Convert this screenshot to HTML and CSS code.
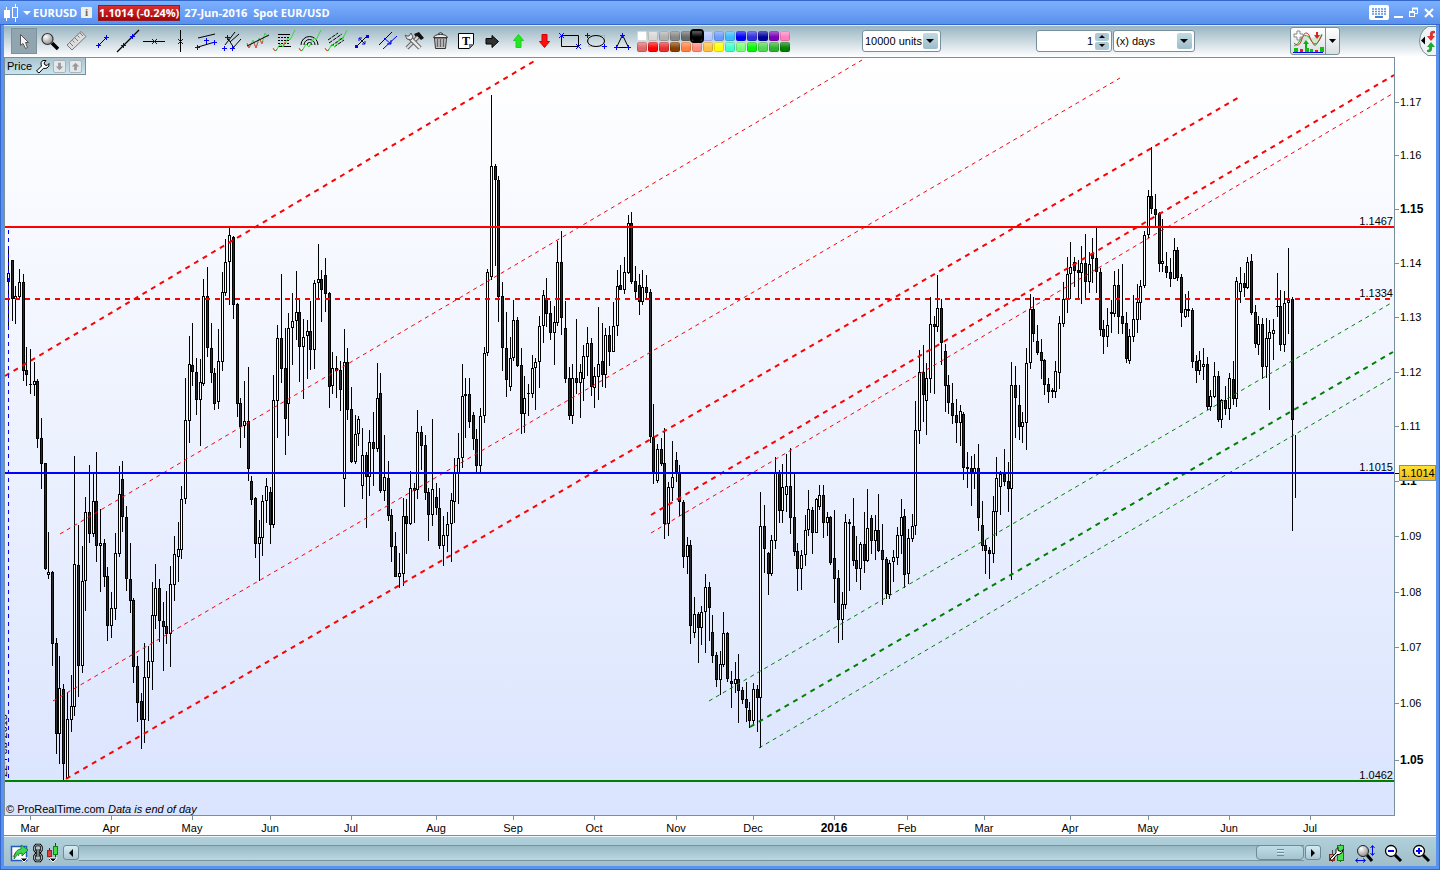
FILE: index.html
```html
<!DOCTYPE html>
<html lang="en">

<head>
    <meta charset="UTF-8">
    <meta name="viewport" content="width=device-width, initial-scale=1.0">
    <title>EURUSD</title>
    <link rel="stylesheet" href="styles.css">
</head>

<body>
    <svg class="defs" aria-hidden="true">
        <linearGradient id="plotFill" x1="0" y1="0" x2="0" y2="1">
            <stop offset="0" stop-color="#ffffff" />
            <stop offset="1" stop-color="#dae4fe" />
        </linearGradient>
        <linearGradient id="tagFill" x1="0" y1="0" x2="0" y2="1">
            <stop offset="0" stop-color="#ffe23a" />
            <stop offset="1" stop-color="#f2b808" />
        </linearGradient>
        <radialGradient id="lens" cx="35%" cy="30%" r="75%">
            <stop offset="0" stop-color="#ffffff" />
            <stop offset="1" stop-color="#8c8c8c" />
        </radialGradient>
        <symbol id="plus" viewBox="0 0 5 5" overflow="visible">
            <path d="M0 2.500h5M2.500 0v5" stroke="#0000ff" fill="none" />
        </symbol>
        <symbol id="cross" viewBox="0 0 5 5" overflow="visible">
            <path d="M0 0l5 5M5 0l-5 5" stroke="#0000ff" fill="none" />
        </symbol>
    </svg>

    <div class="window">
        <header class="titlebar">
            <svg class="app-icon" width="18" height="18" viewBox="0 0 18 18">
                <path d="M3.500 3v14M12.500 0v18" stroke="#fff" fill="none" />
                <rect x="1" y="6" width="6" height="8" fill="#fff" />
                <rect x="9.500" y="3.500" width="5" height="10" fill="#6ea0f8" stroke="#fff" />
            </svg>
            <svg class="caret" width="8" height="4" viewBox="0 0 8 4"><path d="M0 0h8l-4 4z" fill="#fff" /></svg>
            <span class="symbol">EURUSD</span>
            <button class="info" aria-label="Information">i</button>
            <span class="quote">1.1014 (-0.24%)</span>
            <span class="date">27-Jun-2016</span>
            <span class="market">Spot EUR/USD</span>
            <div class="window-buttons">
                <button aria-label="Keyboard">
                    <svg width="20" height="15" viewBox="0 0 20 15">
                        <rect width="20" height="15" rx="2" fill="#fff" />
                        <path d="M3 4h14M3 6.500h14M3 9h14" stroke="#5a8fe8" stroke-width="1.500" stroke-dasharray="2 1" />
                        <path d="M6 12h8" stroke="#4a7fd8" stroke-width="2" />
                    </svg>
                </button>
                <button aria-label="Minimize">
                    <svg width="10" height="12" viewBox="0 0 10 12"><path d="M0 10h9" stroke="#fff" stroke-width="2" /></svg>
                </button>
                <button aria-label="Restore">
                    <svg width="10" height="12" viewBox="0 0 10 12">
                        <path d="M3.500 4V1.500h5v5H6" fill="none" stroke="#fff" />
                        <path d="M3 1.500h6" stroke="#fff" stroke-width="2" />
                        <rect x="0.500" y="4.500" width="5" height="5" fill="none" stroke="#fff" />
                        <path d="M0 5h6" stroke="#fff" stroke-width="2" />
                    </svg>
                </button>
                <button aria-label="Close">
                    <svg width="10" height="12" viewBox="0 0 10 12"><path d="M1 2l8 8M9 2l-8 8" stroke="#fff" stroke-width="2" /></svg>
                </button>
            </div>
        </header>

        <main class="frame">
            <div class="toolbar">
                <div class="tools">
                    <button class="tool active" aria-label="Pointer">
                        <svg viewBox="0 0 24 24"><path d="M8.500 5.500v11l2.500-2 2.500 5 2-1-2-5h3z" fill="#f4f4f4" stroke="#555" /></svg>
                    </button>
                    <button class="tool" aria-label="Zoom">
                        <svg viewBox="0 0 24 24"><path d="M14 14l6 6" stroke="#000" stroke-width="3.500" /><circle cx="9.500" cy="10" r="5.500" fill="url(#lens)" stroke="#333" stroke-width="1.200" /></svg>
                    </button>
                    <button class="tool" aria-label="Ruler">
                        <svg viewBox="0 0 24 24"><path d="M3 16L17 2.500l5 5L8 21z" fill="#ddd" stroke="#777" /><path d="M6 14l3 3M8.500 11.500l2 2M11 9l3 3M13.500 6.500l2 2M16 4l3 3" stroke="#777" /></svg>
                    </button>
                    <button class="tool" aria-label="Segment">
                        <svg viewBox="0 0 24 24"><path d="M8 17l9-9" stroke="#000" /><use href="#plus" x="6" y="14" width="5" height="5" /><use href="#plus" x="14" y="6" width="5" height="5" /></svg>
                    </button>
                    <button class="tool" aria-label="Line">
                        <svg viewBox="0 0 24 24"><path d="M1 23L23 1" stroke="#000" stroke-width="1.200" /><use href="#plus" x="5" y="14" width="5" height="5" /><use href="#plus" x="14" y="5" width="5" height="5" /></svg>
                    </button>
                    <button class="tool" aria-label="Horizontal line">
                        <svg viewBox="0 0 24 24"><path d="M1 12.500h22" stroke="#000" /><use href="#cross" x="10" y="10" width="5" height="5" /></svg>
                    </button>
                    <button class="tool" aria-label="Vertical line">
                        <svg viewBox="0 0 24 24"><path d="M12.500 1v22" stroke="#000" /><use href="#cross" x="10" y="10" width="5" height="5" /></svg>
                    </button>
                    <button class="tool" aria-label="Channel">
                        <svg viewBox="0 0 24 24"><path d="M4 9l17-4M4 18l17-5" stroke="#000" /><path d="M12.500 10v6" stroke="#00f" stroke-dasharray="2 1" /><use href="#plus" x="1" y="16" width="5" height="5" /><use href="#plus" x="10" y="9" width="5" height="5" /><use href="#plus" x="18" y="11" width="5" height="5" /></svg>
                    </button>
                    <button class="tool" aria-label="Pitchfork">
                        <svg viewBox="0 0 24 24"><path d="M5 16L15 3M10 13l9-8M13 19l8-9M7 8l7 11" stroke="#000" /><use href="#plus" x="5" y="6" width="5" height="5" /><use href="#plus" x="2" y="17" width="5" height="5" /><use href="#plus" x="10" y="17" width="5" height="5" /></svg>
                    </button>
                    <button class="tool" aria-label="Linear regression">
                        <svg viewBox="0 0 24 24"><path d="M1 15l2 4 4-8 3 8 3-10 3 5 3-10 3 4" fill="none" stroke="#50c850" /><path d="M1 14l2 5 2-4M8 14l2 5 2-6M14 11l2 4 1-3" fill="none" stroke="#e05050" /><path d="M1 17L23 6" stroke="#000" /></svg>
                    </button>
                    <button class="tool" aria-label="Fibonacci retracement">
                        <svg viewBox="0 0 24 24"><path d="M6 5.500h12M6 17.500h13" stroke="#000" /><path d="M6 8.500h12M6 11.500h12M6 14.500h12" stroke="#000" stroke-dasharray="2 1" /><path d="M1 20l3 2 4-7 3 3 5-9 2 2 5-10" fill="none" stroke="#40d040" /><path d="M1 19l2 3 2-2M11 17l2-4" fill="none" stroke="#f05030" /></svg>
                    </button>
                    <button class="tool" aria-label="Fibonacci arcs">
                        <svg viewBox="0 0 24 24"><path d="M3 16a8.500 8.500 0 0 1 17 0M6 16a5.500 5.500 0 0 1 11 0M9 16a2.500 2.500 0 0 1 5 0" fill="none" stroke="#000" /><path d="M1 20l3 2 4-7 3 3 5-9 2 2 5-10" fill="none" stroke="#40d040" /><path d="M1 19l2 3 2-2" fill="none" stroke="#f05030" /></svg>
                    </button>
                    <button class="tool" aria-label="Fibonacci fan">
                        <svg viewBox="0 0 24 24"><path d="M4 11L14 4M5 14L18 5M7 17L20 8M10 18l10-7" stroke="#000" stroke-dasharray="4 1" /><path d="M1 20l3 2 4-7 3 3 5-9 2 2 5-10" fill="none" stroke="#40d040" /><path d="M1 19l2 3 2-2" fill="none" stroke="#f05030" /></svg>
                    </button>
                    <button class="tool" aria-label="Move object">
                        <svg viewBox="0 0 24 24"><path d="M7 17L17 7" stroke="#000" /><path d="M5 16h3v3H5zM16 6h3v3h-3z" fill="#00f" /><path d="M9 9l6 6M9 12V9h3M12 15h3v-3" fill="none" stroke="#00f" /></svg>
                    </button>
                    <button class="tool" aria-label="Duplicate object">
                        <svg viewBox="0 0 24 24"><path d="M3 16L16 3" stroke="#000" /><path d="M7 20L21 7" stroke="#00f" /><path d="M8 9l7 6M15 11v4h-4" fill="none" stroke="#00f" /></svg>
                    </button>
                    <button class="tool" aria-label="Settings">
                        <svg viewBox="0 0 24 24"><path d="M12 5l5-2 5 6-3 2-2-2-2 1z" fill="#111" /><path d="M5 19L16 8" stroke="#666" stroke-width="4" /><path d="M5 19L16 8" stroke="#ddd" stroke-width="2" /><path d="M7 8l11 11" stroke="#555" stroke-width="4.500" /><path d="M7 8l11 11" stroke="#e8e8e8" stroke-width="2.500" /><path d="M3 6l2 4 4 1 2-3-2-4-2 3-2 0z" fill="#e8e8e8" stroke="#555" /></svg>
                    </button>
                    <button class="tool" aria-label="Delete">
                        <svg viewBox="0 0 24 24"><path d="M6.500 9l1 10.500h10l1-10.500z" fill="#ccc" stroke="#333" /><path d="M9.500 10v8M12.500 10v8M15.500 10v8" stroke="#666" stroke-width="1.500" /><path d="M5.500 8.500q1-3 7-3t7 3z" fill="#eee" stroke="#333" /><path d="M10 5q2.500-3 5 0" fill="none" stroke="#333" /></svg>
                    </button>
                    <button class="tool" aria-label="Text">
                        <svg viewBox="0 0 24 24"><path d="M4.500 4.500h15v11l-4 4h-11z" fill="#fff" stroke="#000" /><path d="M20 15l-5 5v-5z" fill="#777" /><text class="t-glyph" x="12" y="16" text-anchor="middle">T</text></svg>
                    </button>
                    <button class="tool" aria-label="Arrow right">
                        <svg viewBox="0 0 24 24"><path d="M6 9.500h6V6.500l6.500 6-6.500 6v-3.500H6z" fill="#333" stroke="#000" /></svg>
                    </button>
                    <button class="tool" aria-label="Arrow up">
                        <svg viewBox="0 0 24 24"><path d="M12.500 5.500l5 6h-2.500v7h-5v-7H7.500z" fill="#22e822" stroke="#20d020" /></svg>
                    </button>
                    <button class="tool" aria-label="Arrow down">
                        <svg viewBox="0 0 24 24"><path d="M12.500 18.500l5-6h-2.500v-7h-5v7H7.500z" fill="#ff1010" stroke="#d00000" /></svg>
                    </button>
                    <button class="tool" aria-label="Rectangle">
                        <svg viewBox="0 0 24 24"><path d="M3.500 6.500h17v11h-17z" fill="none" stroke="#000" /><use href="#cross" x="1" y="4" width="5" height="5" /><use href="#cross" x="18" y="15" width="5" height="5" /></svg>
                    </button>
                    <button class="tool" aria-label="Ellipse">
                        <svg viewBox="0 0 24 24"><path d="M4.500 6.500h16v11h-16z" fill="none" stroke="#999" stroke-dasharray="1 1" /><ellipse cx="12" cy="12" rx="8.500" ry="5.500" fill="none" stroke="#000" /><use href="#plus" x="1" y="4" width="5" height="5" /><use href="#plus" x="18" y="15" width="5" height="5" /></svg>
                    </button>
                    <button class="tool" aria-label="Triangle">
                        <svg viewBox="0 0 24 24"><path d="M12.500 6l6 12.500h-12z" fill="none" stroke="#000" /><use href="#plus" x="10" y="4" width="5" height="5" /><use href="#plus" x="4" y="16" width="5" height="5" /><use href="#plus" x="16" y="16" width="5" height="5" /></svg>
                    </button>
                </div>
                <div class="palette" id="palette"></div>
                <label class="drop units">
                    <select aria-label="Number of units">
                        <option>10000 units</option>
                        <option>1000 units</option>
                    </select>
                </label>
                <div class="stepper">
                    <input type="text" value="1" aria-label="Period">
                    <div class="steps">
                        <button aria-label="Increase"><svg viewBox="0 0 6 3"><path d="M0 3l3-3 3 3z" /></svg></button>
                        <button aria-label="Decrease"><svg viewBox="0 0 6 3"><path d="M0 0l3 3 3-3z" /></svg></button>
                    </div>
                </div>
                <label class="drop period">
                    <select aria-label="Timeframe">
                        <option>(x) days</option>
                        <option>(x) weeks</option>
                    </select>
                </label>
                <div class="indicators">
                    <button class="add-indicator" aria-label="Add indicator">
                        <svg width="32" height="25" viewBox="0 0 32 25">
                            <path d="M2 17Q6 16 9 10T17 8q3 5 5 8t8-11" fill="#cfe8cf" stroke="#28a838" />
                            <path d="M2 14q5 6 8-4t7-4q3 9 6 9t7-9" fill="none" stroke="#d03838" />
                            <path d="M5 2h3v3h3v3H8v3H5V8H2V5h3z" fill="#fff" stroke="#888" />
                            <path d="M14 11l3 4h-2v4h-2v-4h-2z" fill="#10b010" />
                            <path d="M25 10l3-4h-2V3h-2v3h-2z" fill="#e02020" />
                            <path d="M2 19h4v4H2zM13 19h4v4h-4zM18 20h3v3h-3zM28 18h4v5h-4z" fill="#10c010" />
                            <path d="M8 20h3v3H8zM23 21h3v2h-3z" fill="#e02020" />
                            <path d="M1 23.500h30" stroke="#00f" />
                        </svg>
                    </button>
                    <button class="more" aria-label="Indicator list"><svg width="7" height="4" viewBox="0 0 7 4"><path d="M0 0h7L3.500 4z" /></svg></button>
                </div>
                <button class="side-tab" aria-label="Open side panel">
                    <svg width="17" height="30" viewBox="0 0 17 30">
                        <path d="M17 .5H9L4.500 4Q.5 9 .5 15t4 11L9 29.500h8" fill="#eef3f5" stroke="#78909c" />
                        <path d="M6 10.500v8L2 14.500z" />
                        <path d="M16 5q-6-1-5 5H8l4 5 4-5h-2q-1-3 2-3z" fill="#e03030" />
                        <path d="M8 26q6 1 5-5h3l-4-5-4 5h2q1 3-2 3z" fill="#20a830" />
                    </svg>
                </button>
            </div>

            <section class="chart">
                <svg id="chart" role="img" aria-label="EURUSD daily candlesticks"></svg>
                <div class="panel-title">
                    <span>Price</span>
                    <button aria-label="Price settings">
                        <svg width="15" height="15" viewBox="0 0 15 15"><path d="M1.500 12l5-5Q5 3 8 1.500h3L9 4l1 2 2 .5 2-2q.5 3-2 4.500-2 .8-3.500.3L4 14z" fill="#fff" stroke="#000" /></svg>
                    </button>
                    <button class="small" aria-label="Move down"><svg viewBox="0 0 12 12"><path d="M4.500 2h3v4H10l-4 4-4-4h2.500z" fill="#999" /></svg></button>
                    <button class="small" aria-label="Move up"><svg viewBox="0 0 12 12"><path d="M4.500 10h3V6H10L6 2 2 6h2.500z" fill="#999" /></svg></button>
                </div>
            </section>

            <footer class="bottombar">
                <button aria-label="Export">
                    <svg width="20" height="20" viewBox="0 0 20 20">
                        <path d="M2.500 3.500h15v14h-15z" fill="#fff" stroke="#2458c0" stroke-width="1.500" />
                        <path d="M4 14l3-5 3 4" fill="none" stroke="#e03030" />
                        <path d="M5 16q1-10 7-10V2l7 5-6 6V10q-5 0-8 6z" fill="#40d850" stroke="#188828" />
                        <path d="M11 15h8l-4 4z" stroke="#fff" />
                    </svg>
                </button>
                <button aria-label="Link">
                    <svg width="10" height="20" viewBox="0 0 10 20">
                        <path d="M3 2h4l1.500 2v3L7 9H3L1.500 7V4zM3 11h4l1.500 2v3L7 18H3l-1.500-2v-3z" fill="none" stroke="#000" stroke-width="2.500" />
                        <path d="M3 2h4l1.500 2v3L7 9H3L1.500 7V4zM3 11h4l1.500 2v3L7 18H3l-1.500-2v-3z" fill="none" stroke="#ddd" stroke-width="0.800" />
                        <path d="M5 6v8" stroke="#000" stroke-width="3" />
                        <path d="M5 6v8" stroke="#fff" />
                    </svg>
                </button>
                <button aria-label="Chart style">
                    <svg width="12" height="20" viewBox="0 0 12 20">
                        <path d="M2.500 5v12M8.500 0v15" stroke="#333" />
                        <rect x="0.500" y="7.500" width="4" height="6" fill="#e04040" stroke="#a02020" />
                        <rect x="6.500" y="3.500" width="4" height="8" fill="#40e040" stroke="#108010" />
                        <path d="M2 15h8l-4 4z" stroke="#fff" />
                    </svg>
                </button>
                <div class="scroller">
                    <button class="arrow" aria-label="Scroll left"><svg width="4" height="8" viewBox="0 0 4 8"><path d="M4 0v8L0 4z" /></svg></button>
                    <input type="range" min="0" max="100" value="100" aria-label="Scroll chart">
                    <button class="arrow" aria-label="Scroll right"><svg width="4" height="8" viewBox="0 0 4 8"><path d="M0 0v8l4-4z" /></svg></button>
                </div>
                <button class="view" aria-label="Chart settings">
                    <svg width="20" height="20" viewBox="0 0 20 20">
                        <path d="M5.500 7v12M13.500 1v18" stroke="#444" />
                        <rect x="2.500" y="11.500" width="5" height="6" fill="#e88070" stroke="#803020" />
                        <rect x="10.500" y="2.500" width="6" height="15" fill="#50e050" stroke="#108010" />
                        <path d="M3 16l6-6Q8 6 11 4.500L11 7.500l3 1 2-2q0 4-4 5l-2 0-5 6z" fill="#fff" stroke="#000" />
                    </svg>
                </button>
                <button class="view" aria-label="Fit">
                    <svg width="20" height="20" viewBox="0 0 20 20">
                        <path d="M12 12l5 6" stroke="#000" stroke-width="3" />
                        <circle cx="8" cy="8" r="5.500" fill="url(#lens)" stroke="#222" />
                        <path d="M17.500 3v9M15.500 5l2-2.500 2 2.500M15.500 10l2 2.500 2-2.500M1 17.500h9M3 15.500l-2.500 2 2.500 2M8 15.500l2.500 2-2.500 2" fill="none" stroke="#00f" />
                    </svg>
                </button>
                <button class="view" aria-label="Zoom out">
                    <svg width="20" height="20" viewBox="0 0 20 20"><path d="M12 12l6 6" stroke="#000" stroke-width="3" /><circle cx="8" cy="8" r="5.500" fill="#fff" stroke="#000" stroke-width="1.300" /><path d="M5 8h6" stroke="#00f" stroke-width="2" /></svg>
                </button>
                <button class="view" aria-label="Zoom in">
                    <svg width="20" height="20" viewBox="0 0 20 20"><path d="M12 12l6 6" stroke="#000" stroke-width="3" /><circle cx="8" cy="8" r="5.500" fill="#fff" stroke="#000" stroke-width="1.300" /><path d="M5 8h6M8 5v6" stroke="#00f" stroke-width="2" /></svg>
                </button>
            </footer>
        </main>
    </div>

    <script src="chart.js"></script>
</body>

</html>
```

FILE: styles.css
```css
* {
    box-sizing: border-box;
}

body {
    margin: 0;
    font-family: "Liberation Sans", Arial, sans-serif;
    font-size: 11px;
    color: #000;
}

button {
    padding: 0;
    border: 0;
    background: none;
    font: inherit;
}

button svg {
    display: block;
}

.defs {
    position: absolute;
    width: 0;
    height: 0;
}

.window {
    display: flex;
    flex-direction: column;
    height: 100vh;
    background-color: #5a93ef;
    box-shadow: inset 0 0 0 1px #3467cc;
}

/* title bar */

.titlebar {
    display: flex;
    align-items: center;
    height: 25px;
    padding: 0 6px 0 3px;
    border-top: 1px solid #3467cc;
    border-bottom: 1px solid #3467cc;
    background: linear-gradient(#7cb0ff, #5990ec);
    color: #fff;
    font-family: "Open Sans", "Noto Sans", sans-serif;
    font-weight: bold;
}

.caret {
    margin: 0 2px;
}

.symbol {
    width: 48px;
}

.info {
    width: 11px;
    height: 11px;
    border-radius: 1px;
    background-color: #f0f0e8;
    color: #666;
    font-family: "Liberation Serif", serif;
    font-weight: bold;
    line-height: 11px;
}

.quote {
    margin: 0 4px 0 6px;
    border: 1px solid #8c1c2c;
    background: linear-gradient(#d83030, #a80000);
    line-height: 14px;
}

.market {
    margin-left: 6px;
}

.window-buttons {
    display: flex;
    align-items: center;
    gap: 5px;
    margin-left: auto;
}

/* toolbar */

.frame {
    display: flex;
    flex: 1;
    flex-direction: column;
    min-height: 0;
    margin: 0 4px 4px;
    background-color: #fff;
}

.toolbar {
    display: flex;
    align-items: center;
    height: 32px;
    padding: 0 0 1px 7px;
    border-top: 1px solid #e4eef2;
    background: linear-gradient(#98b5c1, #fff);
}

.tools {
    display: flex;
}

.tool {
    width: 26px;
    height: 26px;
    padding: 1px;
}

.tool.active {
    border: 1px solid #7c929d;
    padding: 0;
    background-color: #90a5af;
}

.tool svg {
    width: 24px;
    height: 24px;
}

.t-glyph {
    font: bold 12px "Liberation Serif", serif;
}

.palette {
    display: grid;
    grid-template-columns: repeat(14, 10px);
    gap: 1px;
    margin-left: 2px;
}

.swatch {
    width: 10px;
    height: 10px;
    border-radius: 2px;
    box-shadow: inset 0 0 0 1px rgba(0, 0, 0, 0.15);
    background-image: linear-gradient(rgba(255, 255, 255, 0.4), transparent 60%);
}

.swatch.selected {
    outline: 2px solid #000;
    z-index: 1;
}

.drop,
.stepper {
    display: flex;
    align-items: center;
    position: relative;
    height: 22px;
    border: 1px solid #78909c;
    border-radius: 3px;
    background-color: #fff;
}

.drop::after {
    content: "";
    position: absolute;
    right: 2px;
    width: 15px;
    height: 16px;
    border-radius: 2px;
    background: linear-gradient(#c0dbe5, #9dbdca);
    pointer-events: none;
}

.drop::before {
    content: "";
    position: absolute;
    right: 6px;
    z-index: 1;
    border: 4px solid transparent;
    border-top-color: #000;
    border-bottom-width: 0;
    pointer-events: none;
}

.drop select,
.stepper input {
    width: 100%;
    height: 20px;
    padding: 0 2px;
    border: 0;
    background: none;
    appearance: none;
    font: inherit;
    color: inherit;
}

.units {
    width: 79px;
    margin-left: 72px;
}

.period {
    width: 82px;
    margin-left: 1px;
}

.stepper {
    width: 76px;
    margin-left: 95px;
    padding-right: 2px;
}

.stepper input {
    min-width: 0;
    text-align: right;
}

.steps button {
    display: flex;
    align-items: center;
    justify-content: center;
    width: 14px;
    height: 8px;
    margin: 1px 0;
    border-radius: 2px;
    background-color: #acc9d4;
}

.steps svg {
    width: 6px;
    height: 3px;
}

.indicators {
    display: flex;
    height: 28px;
    margin-left: auto;
    border: 1px solid #78909c;
    border-radius: 3px;
    background: linear-gradient(#fff, #dadee0);
}

.add-indicator {
    padding: 0 1px;
    border-right: 1px solid #78909c;
}

.more {
    display: flex;
    align-items: center;
    justify-content: center;
    width: 13px;
}

.side-tab {
    margin-left: 79px;
}

/* chart */

.chart {
    flex: 1;
    position: relative;
    min-height: 0;
    border-bottom: 1px solid #78909c;
}

#chart {
    display: block;
    width: 100%;
    height: 100%;
}

#chart text {
    font-size: 11px;
}

#chart .major {
    font-size: 12px;
    font-weight: bold;
}

#chart .italic {
    font-style: italic;
}

.panel-title {
    display: flex;
    align-items: center;
    gap: 3px;
    position: absolute;
    left: 1px;
    top: 1px;
    height: 17px;
    padding: 0 3px 0 2px;
    border: solid #78909c;
    border-width: 0 1px 1px 0;
    background: linear-gradient(#a8c3ce, #c8e6f0);
}

.small {
    width: 13px;
    height: 13px;
    border: 1px solid #aab4b8;
    border-radius: 2px;
    background-color: #e4e8ea;
}

/* bottom bar */

.bottombar {
    display: flex;
    align-items: center;
    gap: 4px;
    height: 30px;
    padding: 2px 3px 0 5px;
    border-top: 1px solid #eef6f9;
    background: linear-gradient(#b0d0db, #9fbeca);
}

.scroller {
    display: flex;
    flex: 1;
    align-items: center;
}

.arrow {
    display: flex;
    align-items: center;
    justify-content: center;
    width: 16px;
    height: 15px;
    border: 1px solid #6f8a96;
    border-radius: 3px;
    background: linear-gradient(#d5ebf3, #a9c8d4);
}

.scroller input {
    flex: 1;
    height: 16px;
    margin: 0 1px 0 0;
    border: 1px solid #78929e;
    border-width: 1px 0;
    background: linear-gradient(#98b8c4, #b8d8e3);
    appearance: none;
}

.scroller input::-webkit-slider-thumb {
    width: 48px;
    height: 15px;
    border: 1px solid #6f8a96;
    border-radius: 4px;
    background:
        repeating-linear-gradient(#6f8a96 0 1px, #d5ebf3 1px 2px, transparent 2px 3px) center / 7px 7px no-repeat,
        linear-gradient(#c0dde7, #a3c3cf);
    appearance: none;
}

.view {
    width: 24px;
    padding: 0 2px;
}
```

FILE: chart.js
```js
const NS = 'http://www.w3.org/2000/svg';
const svg = document.getElementById('chart');

const swatches = [
    '#ffffff', '#d8d8d8', '#b0b0b0', '#888888', '#686868', '#000000', '#b4c8ff',
    '#6a9cff', '#3cbcff', '#0000ff', '#3030e0', '#0000a0', '#7c00b8', '#ff80c0',
    '#e06868', '#ff0000', '#e83030', '#884000', '#ff8040', '#ff8c7c', '#ffc040',
    '#ffff00', '#40ffc8', '#78ff78', '#00f800', '#50d850', '#30b030', '#008000'
];

// x, high, body top, body bottom, low, 1 = up / 0 = down
const candles = [
    [8,250,273,282,326,1],[12,260,260,299,321,0],[15,286,296,299,324,1],[19,269,282,297,299,1],
    [23,274,282,371,381,0],[26,347,370,375,386,0],[30,349,384,385,394,0],[34,362,381,385,396,1],
    [37,379,381,439,448,0],[41,418,438,464,489,0],[45,463,463,569,570,0],[48,532,572,575,579,1],
    [52,571,572,644,666,0],[56,638,643,734,754,0],[59,656,688,734,764,1],[63,684,689,764,780,0],
    [67,692,719,778,779,1],[71,675,706,720,732,1],[74,456,564,707,716,1],[78,525,565,666,697,0],
    [82,546,581,666,673,1],[85,497,512,581,611,1],[89,465,512,534,543,0],[93,473,501,534,537,1],
    [96,452,501,546,562,0],[100,509,543,546,592,1],[104,539,543,577,587,0],[107,567,576,626,641,0],
    [111,592,608,626,638,1],[115,533,553,609,620,1],[119,466,494,554,557,1],[122,461,479,517,532,0],
    [126,506,517,579,591,0],[130,543,579,601,613,0],[133,598,600,667,683,0],[137,656,666,703,722,0],
    [141,693,701,720,749,0],[144,643,677,720,743,1],[148,646,661,678,721,1],[152,582,615,662,690,1],
    [155,564,588,616,629,1],[159,579,588,621,642,0],[163,602,621,627,671,0],[166,591,626,634,644,0],
    [170,566,584,634,667,1],[174,536,554,585,601,1],[178,522,549,557,582,1],[181,486,499,550,559,1],
    [185,378,420,499,504,1],[189,336,364,421,443,1],[192,323,365,372,386,0],[196,358,372,400,415,0],
    [200,359,382,400,446,1],[203,279,296,384,386,1],[207,267,296,348,357,0],[211,323,348,373,383,0],
    [214,368,373,404,410,0],[218,329,361,402,409,1],[222,272,292,362,371,1],[225,239,262,293,296,1],
    [229,228,235,262,305,1],[233,236,237,305,319,0],[237,303,304,404,417,0],[240,398,403,427,448,0],
    [244,381,421,426,438,1],[248,367,421,469,481,0],[251,476,481,500,505,0],[255,497,498,544,558,0],
    [259,520,537,544,581,1],[262,495,501,538,556,1],[266,478,486,501,523,1],[270,487,492,525,544,0],
    [273,375,400,525,528,1],[277,325,338,401,438,1],[281,274,338,369,383,0],[285,328,368,419,455,0],
    [288,313,328,404,436,1],[292,293,321,328,365,1],[296,271,312,321,340,1],[299,298,312,347,382,0],
    [303,319,337,347,399,1],[307,320,331,336,379,1],[310,301,331,350,370,0],[314,280,283,350,369,1],
    [318,244,279,283,298,1],[321,270,279,290,322,0],[325,258,275,294,312,0],[329,292,293,387,408,0],
    [332,352,368,386,394,1],[336,356,368,371,398,0],[340,361,370,390,411,0],[344,329,362,479,507,1],
    [347,348,362,410,420,0],[351,387,409,462,463,0],[355,415,434,462,464,1],[358,416,419,434,446,1],
    [362,428,455,486,499,1],[366,452,455,477,528,0],[369,430,442,477,496,1],[373,412,442,449,486,0],
    [377,363,398,449,452,1],[380,373,393,491,493,0],[384,435,477,491,501,1],[388,461,478,516,521,0],
    [391,509,515,547,562,0],[395,532,546,577,577,0],[399,553,573,577,588,1],[403,498,516,574,586,1],
    [406,499,516,524,554,0],[410,471,488,524,525,1],[414,483,488,491,523,0],[417,410,432,490,499,1],
    [421,426,432,446,470,0],[425,435,445,493,500,0],[428,488,492,515,541,0],[432,419,489,515,526,1],
    [436,483,497,508,515,0],[439,488,508,546,549,0],[443,516,535,546,566,1],[447,512,524,536,552,1],
    [451,493,500,524,562,1],[454,458,473,502,523,1],[458,433,458,473,504,1],[462,364,396,458,468,1],
    [465,378,394,396,438,1],[469,378,394,422,428,0],[473,412,415,439,450,0],[476,429,439,466,472,0],
    [480,408,416,466,472,1],[484,347,353,416,423,1],[487,269,272,353,356,1],[491,95,166,277,280,1],
    [495,164,166,180,266,0],[498,176,180,297,322,0],[502,282,296,348,371,0],[506,312,348,380,397,0],
    [510,337,358,387,391,1],[513,300,320,358,361,1],[517,317,320,366,367,0],[521,348,365,414,434,0],
    [524,376,398,414,433,1],[528,384,393,394,416,0],[532,355,368,394,398,1],[535,358,362,368,410,1],
    [539,316,326,362,388,1],[543,290,295,326,343,1],[546,278,298,314,327,0],[550,301,313,333,340,0],
    [554,306,322,333,365,1],[557,241,262,323,326,1],[561,231,262,318,335,0],[565,301,328,379,383,0],
    [569,367,378,416,420,0],[572,364,378,416,424,1],[576,319,378,383,394,0],[580,364,372,383,418,1],
    [583,345,356,379,401,1],[587,327,343,357,376,1],[591,338,343,387,396,0],[594,367,376,388,408,1],
    [598,307,364,377,400,1],[602,323,361,375,387,0],[605,328,335,375,388,1],[609,326,335,352,366,0],
    [613,302,326,352,352,1],[617,270,286,326,336,1],[620,265,285,290,290,0],[624,257,272,290,294,1],
    [628,215,223,273,274,1],[631,212,223,282,284,0],[635,266,281,292,299,0],[639,274,285,302,315,0],
    [642,270,287,302,305,1],[646,275,287,293,300,0],[650,289,292,437,443,0],[653,404,437,472,484,0],
    [657,444,449,481,483,1],[661,438,449,464,466,0],[664,428,463,524,539,0],[668,482,487,524,536,1],
    [672,441,477,488,501,1],[676,452,460,472,482,0],[679,465,472,502,516,0],[683,500,502,557,568,0],
    [687,537,545,557,574,1],[690,540,545,626,644,0],[694,597,614,633,638,1],[698,612,614,628,663,0],
    [701,606,612,628,645,1],[705,574,587,612,653,1],[709,582,587,608,641,0],[712,615,632,656,663,0],
    [716,652,655,680,687,0],[720,651,664,680,695,1],[723,612,633,665,667,1],[727,632,633,679,682,0],
    [731,671,681,684,708,0],[735,662,679,684,693,1],[738,654,679,691,723,0],[742,687,690,700,704,0],
    [746,682,699,708,722,0],[749,702,710,721,728,0],[753,683,689,721,726,1],[757,685,689,698,732,0],
    [760,492,526,698,748,1],[764,505,526,549,573,0],[768,552,553,574,595,0],[771,535,540,574,576,1],
    [775,457,473,541,549,1],[779,470,473,511,523,0],[782,464,487,511,523,1],[786,454,486,495,512,1],
    [790,448,486,518,534,0],[794,473,517,552,556,0],[797,543,551,569,591,0],[801,550,555,569,590,1],
    [805,515,530,555,566,1],[808,490,509,530,536,1],[812,507,510,533,554,0],[816,498,499,533,533,1],
    [819,485,495,507,510,1],[823,485,495,523,538,0],[827,512,517,523,536,1],[830,516,517,563,565,0],
    [834,510,558,579,603,0],[838,570,578,620,643,0],[842,592,604,620,640,1],[845,514,522,605,609,1],
    [849,519,522,524,591,0],[853,498,526,561,566,0],[856,536,560,569,582,0],[860,542,544,569,590,1],
    [864,512,544,561,573,0],[867,489,528,561,562,1],[871,515,518,541,554,0],[875,515,530,541,560,1],
    [878,494,530,551,552,0],[882,524,550,560,605,0],[886,557,559,594,599,0],[889,560,563,595,599,1],
    [893,550,557,562,582,1],[897,527,535,558,565,1],[901,499,517,536,554,1],[904,509,516,575,588,0],
    [908,529,538,574,584,1],[912,514,526,539,542,1],[915,401,430,526,535,1],[919,350,372,431,444,1],
    [923,345,372,395,422,0],[926,363,378,401,435,1],[930,297,324,379,393,1],[934,316,324,327,394,0],
    [937,275,308,327,332,1],[941,299,308,343,365,0],[945,344,351,386,412,0],[948,375,385,403,414,0],
    [952,383,403,416,424,0],[956,399,415,423,443,0],[960,405,411,423,446,1],[963,412,414,468,480,0],
    [967,452,467,469,488,0],[971,456,468,473,506,0],[974,454,468,473,489,1],[978,444,468,518,531,0],
    [982,501,525,546,551,0],[985,540,545,551,574,0],[989,547,550,554,579,0],[993,496,511,554,563,1],
    [996,457,478,512,536,1],[1000,471,474,487,515,1],[1004,449,474,482,486,0],[1008,462,481,489,512,0],
    [1011,362,385,489,580,1],[1015,366,385,398,438,0],[1019,385,405,427,440,0],[1022,412,422,427,443,1],
    [1026,348,363,423,450,1],[1030,294,309,363,369,1],[1033,297,309,334,342,0],[1037,325,341,353,355,0],
    [1041,339,352,361,379,0],[1044,359,360,385,395,0],[1048,378,384,392,403,0],[1052,388,390,392,398,0],
    [1055,361,371,392,398,1],[1059,316,323,373,389,1],[1063,282,299,324,327,1],[1067,257,274,300,313,1],
    [1070,242,267,274,299,1],[1074,257,262,271,287,0],[1078,260,270,273,299,0],[1081,246,263,273,304,1],
    [1085,234,263,282,299,0],[1089,252,264,282,293,1],[1092,238,254,259,283,0],[1096,228,258,272,293,0],
    [1100,268,272,330,336,0],[1103,320,329,337,354,0],[1107,308,325,337,347,1],[1111,300,312,314,333,0],
    [1114,271,285,314,317,1],[1118,269,285,317,334,0],[1122,264,316,324,334,0],[1126,312,323,359,363,0],
    [1129,329,336,361,364,1],[1133,295,319,337,342,1],[1137,284,302,320,333,1],[1140,280,286,303,320,1],
    [1144,231,235,286,288,1],[1148,190,196,235,238,1],[1151,147,196,209,214,0],[1155,194,209,215,227,0],
    [1159,212,213,264,272,0],[1162,219,261,264,272,1],[1166,252,266,273,278,0],[1170,258,272,279,287,0],
    [1174,238,250,279,279,1],[1177,247,250,278,281,0],[1181,274,277,313,327,0],[1185,294,309,317,318,1],
    [1188,291,309,311,317,0],[1192,308,310,362,368,0],[1196,355,361,371,383,0],[1199,351,360,371,375,1],
    [1203,348,364,367,380,1],[1207,357,364,407,410,0],[1210,390,396,407,411,1],[1214,362,376,397,398,1],
    [1218,371,376,420,422,0],[1221,399,400,420,428,1],[1225,386,400,409,415,0],[1229,373,378,409,420,1],
    [1233,361,379,399,405,0],[1236,277,281,399,407,1],[1240,267,283,292,303,1],[1244,273,283,288,297,0],
    [1247,257,262,288,289,1],[1251,254,261,313,315,0],[1255,305,312,344,348,0],[1258,316,324,345,355,1],
    [1262,318,324,367,379,0],[1266,318,338,367,378,1],[1269,320,332,339,410,1],[1273,319,330,334,360,1],
    [1277,273,306,307,317,0],[1280,290,306,345,351,0],[1284,291,303,345,352,1],[1288,248,300,303,334,1],
    [1292,297,299,420,531,0],[1295,435,473,474,498,0]
];

// x1, y1, x2, y2, colour, stroke width
const trends = [
    [5, 376, 536, 60, '#ff0000', 2],
    [60, 534, 862, 60, '#ff0000', 1],
    [53, 701, 1120, 78, '#ff0000', 1],
    [66, 779, 1241, 96, '#ff0000', 2],
    [651, 515, 1394, 75, '#ff0000', 2],
    [651, 533, 1392, 94, '#ff0000', 1],
    [709, 701, 1393, 302, '#008000', 1],
    [750, 727, 1393, 352, '#008000', 2],
    [759, 748, 1393, 377, '#008000', 1]
];

const levels = [
    [227, '#ff0000', '1.1467', false],
    [299, '#ff0000', '1.1334', true],
    [473, '#0000ff', '1.1015', false],
    [781, '#008000', '1.0462', false]
];

const prices = [
    ['1.17', 102], ['1.16', 155], ['1.15', 209, 1], ['1.14', 263], ['1.13', 317],
    ['1.12', 372], ['1.11', 426], ['1.1', 481, 1], ['1.09', 536], ['1.08', 592],
    ['1.07', 647], ['1.06', 703], ['1.05', 760, 1]
];

const months = [
    ['Mar', 30], ['Apr', 111], ['May', 192], ['Jun', 270], ['Jul', 351], ['Aug', 436],
    ['Sep', 513], ['Oct', 594], ['Nov', 676], ['Dec', 753], ['2016', 834, 1], ['Feb', 907],
    ['Mar', 984], ['Apr', 1070], ['May', 1148], ['Jun', 1229], ['Jul', 1310]
];

function add(tag, attrs, text) {
    const el = document.createElementNS(NS, tag);
    Object.keys(attrs).forEach(key => el.setAttribute(key, attrs[key]));
    if (text) el.textContent = text;
    svg.appendChild(el);
    return el;
}

function line(x1, y1, x2, y2, stroke, width, dash) {
    const attrs = { x1, y1, x2, y2, stroke, 'stroke-width': width };
    if (dash) attrs['stroke-dasharray'] = dash;
    add('line', attrs);
}

function draw() {
    const box = svg.getBoundingClientRect();
    const right = box.width - 42;
    const bottom = box.height - 20;
    const sx = x => (x - 4) * right / 1390;
    const sy = y => (y - 57) * bottom / 758;
    const px = x => Math.round(sx(x));
    const py = y => Math.round(sy(y));

    svg.innerHTML = '';
    add('rect', { x: 0.5, y: 0.5, width: right, height: bottom, fill: 'url(#plotFill)', stroke: '#78909c' });

    // candles
    let wicks = '';
    let bodies = '';
    let hollow = '';
    let solid = '';
    candles.forEach(([x, high, top, base, low, up]) => {
        const cx = px(x);
        const t = py(top);
        const b = Math.max(py(base), t + 1);
        wicks += `M${cx} ${py(high)}h1V${py(low)}h-1z`;
        bodies += `M${cx - 1} ${t}h3V${b}h-3z`;
        if (b - t > 2) {
            const hole = `M${cx} ${t + 1}h1V${b - 1}h-1z`;
            if (up) hollow += hole;
            else solid += hole;
        }
    });
    add('path', { d: wicks + bodies, fill: '#000' });
    add('path', { d: hollow, fill: '#fff' });
    add('path', { d: solid, fill: '#2a2a2a' });

    trends.forEach(([x1, y1, x2, y2, color, width]) => {
        line(sx(x1), sy(y1), sx(x2), sy(y2), color, width, width === 2 ? '5 5' : '4 4');
    });

    levels.forEach(([y, color, label, dashed]) => {
        line(1, py(y), right, py(y), color, 2, dashed ? '5 5' : '');
        add('text', { x: right - 1, y: py(y) - 2, 'text-anchor': 'end' }, label);
    });

    // start of the history
    line(px(8) + 0.5, py(230), px(8) + 0.5, py(778), '#0000ff', 1, '4 4');
    const clip = add('svg', { x: 1, y: 0, width: 8, height: bottom });
    const start = add('text', { transform: `translate(2 ${py(777)}) rotate(-90)` }, '22-Feb-2015');
    clip.appendChild(start);

    add('text', { x: 2, y: bottom - 2 }, '© ProRealTime.com');
    add('text', { x: 104, y: bottom - 2, class: 'italic' }, 'Data is end of day');

    // axes
    prices.forEach(([label, y, major]) => {
        line(right + 1, py(y) + 0.5, right + 5, py(y) + 0.5, '#78909c', 1);
        add('text', { x: right + 6, y: py(y) + 4, class: major ? 'major' : 'minor' }, label);
    });
    months.forEach(([label, x, major]) => {
        line(px(x) + 0.5, bottom + 1, px(x) + 0.5, bottom + 5, '#78909c', 1);
        add('text', { x: px(x), y: bottom + 17, 'text-anchor': 'middle', class: major ? 'major' : 'minor' }, label);
    });

    // last price
    line(right + 1, py(473) + 0.5, right + 5, py(473) + 0.5, '#000', 1);
    add('rect', { x: right + 5.5, y: py(465) + 0.5, width: 36, height: 15, fill: 'url(#tagFill)', stroke: '#78909c' });
    add('text', { x: right + 7, y: py(477) }, '1.1014');
}

const palette = document.getElementById('palette');
swatches.forEach((color, i) => {
    const button = document.createElement('button');
    button.className = i === 5 ? 'swatch selected' : 'swatch';
    button.style.backgroundColor = color;
    button.setAttribute('aria-label', color);
    palette.appendChild(button);
});

draw();
window.addEventListener('resize', draw);
```
